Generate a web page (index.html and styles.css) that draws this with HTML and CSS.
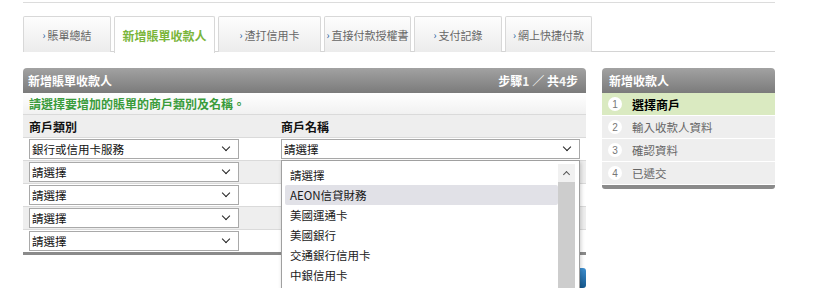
FILE: index.html
```html
<!DOCTYPE html>
<html lang="zh-Hant">
  <head>
    <meta charset="UTF-8" />
    <meta name="viewport" content="width=device-width, initial-scale=1.0" />
    <title>新增賬單收款人</title>
    <link rel="stylesheet" href="styles.css">
  </head>
  <body>
    <div class="page">
      <div class="topline"></div>
      <ul class="tabs">
        <li class="tab"><span class="arrow">›</span>賬單總結</li>
        <li class="tab active">新增賬單收款人</li>
        <li class="tab"><span class="arrow">›</span>渣打信用卡</li>
        <li class="tab"><span class="arrow">›</span>直接付款授權書</li>
        <li class="tab"><span class="arrow">›</span>支付記錄</li>
        <li class="tab"><span class="arrow">›</span>網上快捷付款</li>
      </ul>
      <div class="content">
        <div class="main">
          <div class="panel">
            <div class="panel-head">
              <span>新增賬單收款人</span>
              <span class="steps">步驟<b>1</b> ／ 共<b>4</b>步</span>
            </div>
            <div class="hint">請選擇要增加的賬單的商戶類別及名稱。</div>
            <div class="grid head-row">
              <div>商戶類別</div>
              <div>商戶名稱</div>
            </div>
            <div class="grid row">
              <div class="select short">銀行或信用卡服務<span class="chev"></span></div>
              <div class="select wide">請選擇<span class="chev"></span></div>
            </div>
            <div class="grid row odd">
              <div class="select short">請選擇<span class="chev"></span></div>
              <div class="select wide"></div>
            </div>
            <div class="grid row">
              <div class="select short">請選擇<span class="chev"></span></div>
              <div class="select wide"></div>
            </div>
            <div class="grid row odd">
              <div class="select short">請選擇<span class="chev"></span></div>
              <div class="select wide"></div>
            </div>
            <div class="grid row">
              <div class="select short">請選擇<span class="chev"></span></div>
              <div class="select wide"></div>
            </div>
            <div class="panel-foot"></div>
          </div>
          <div class="actions">
            <span class="btn">下一步</span>
          </div>

          <div class="dropdown">
            <ul class="options">
              <li>請選擇</li>
              <li class="hover">AEON信貸財務</li>
              <li>美國運通卡</li>
              <li>美國銀行</li>
              <li>交通銀行信用卡</li>
              <li>中銀信用卡</li>
              <li>建行(亞洲)銀聯雙幣信用卡</li>
            </ul>
            <div class="scrollbar">
              <div class="scroll-up"></div>
              <div class="thumb"></div>
            </div>
          </div>
        </div>

        <div class="side">
          <div class="panel-head">新增收款人</div>
          <ul class="step-list">
            <li class="current"><span class="num">1</span>選擇商戶</li>
            <li><span class="num">2</span>輸入收款人資料</li>
            <li><span class="num">3</span>確認資料</li>
            <li><span class="num">4</span>已遞交</li>
          </ul>
          <div class="side-foot"></div>
        </div>
      </div>
    </div>
  </body>
</html>
```

FILE: styles.css
```css
* {
  box-sizing: border-box;
  font-family: "Noto Sans CJK TC", "Liberation Sans", sans-serif;
}
body {
  margin: 0;
  background-color: #fff;
  color: #222;
}
ul {
  list-style: none;
  margin: 0;
  padding: 0;
}
.page {
  width: 752px;
  margin-left: 23px;
  padding-top: 2px;
}
.topline {
  height: 1px;
  background-color: #dcdcdc;
}

/* tabs */
.tabs {
  display: flex;
  margin-top: 13px;
  height: 36px;
  border-bottom: 1px solid #d4d4d4;
}
.tab {
  height: 36px;
  margin-right: 3px;
  display: flex;
  align-items: center;
  justify-content: center;
  white-space: nowrap;
  font-size: 11px;
  color: #666;
  border: 1px solid #d8d8d8;
  border-bottom: none;
  border-radius: 2px 2px 0 0;
  background: linear-gradient(#fdfdfd, #ececec);
}
.tab:nth-child(1) { width: 88px; }
.tab:nth-child(2) { width: 101px; }
.tab:nth-child(3) { width: 103px; }
.tab:nth-child(4) { width: 87px; }
.tab:nth-child(5) { width: 88px; }
.tab:nth-child(6) { width: 87px; }
.tab .arrow {
  color: #1f5f9e;
  font-size: 10px;
  margin-right: 2px;
}
.tab.active {
  height: 37px;
  background: #fff;
  color: #7ab53a;
  font-weight: bold;
  font-size: 12px;
}

.content {
  display: flex;
  gap: 16px;
  margin-top: 16px;
}

/* main panel */
.main {
  position: relative;
  width: 563px;
}
.panel-head {
  height: 25px;
  display: flex;
  align-items: center;
  justify-content: space-between;
  padding: 0 8px 0 5px;
  background: linear-gradient(#a2a2a2, #7b7b7b);
  border-radius: 4px 4px 0 0;
  color: #fff;
  font-weight: bold;
  font-size: 12px;
}
.steps b {
  font-weight: bold;
  color: #f4f4f4;
}
.hint {
  height: 21px;
  padding-left: 6px;
  display: flex;
  align-items: center;
  font-size: 12px;
  font-weight: bold;
  color: #3a9c3c;
  background: linear-gradient(#fff, #f1f1f1);
}
.grid {
  display: grid;
  grid-template-columns: 252px 1fr;
  padding: 0 6px;
  align-items: center;
  border-top: 1px solid #dadada;
}
.head-row {
  height: 23px;
  background-color: #eee;
  font-size: 12px;
  font-weight: bold;
  color: #111;
}
.row {
  height: 23px;
  background-color: #fff;
}
.row.odd {
  background-color: #eee;
}
.select {
  position: relative;
  height: 20px;
  display: flex;
  align-items: center;
  padding-left: 2px;
  font-size: 11.5px;
  color: #111;
  background-color: #fff;
  border: 1px solid #a9a9a9;
}
.select.short {
  width: 210px;
}
.select.wide {
  width: 299px;
}
.chev {
  position: absolute;
  right: 9px;
  top: 4px;
  width: 6px;
  height: 6px;
  border-right: 1.5px solid #222;
  border-bottom: 1.5px solid #222;
  transform: rotate(45deg);
}
.panel-foot {
  height: 3px;
  background-color: #8a8a8a;
}
.actions {
  display: flex;
  justify-content: flex-end;
  margin-top: 13px;
}
.btn {
  width: 64px;
  height: 20px;
  display: flex;
  align-items: center;
  justify-content: center;
  font-size: 12px;
  color: #fff;
  border-radius: 3px;
  background: linear-gradient(#3d8fd0, #16598f);
}

/* open dropdown */
.dropdown {
  position: absolute;
  left: 258px;
  top: 92px;
  width: 299px;
  height: 160px;
  display: flex;
  padding: 3px 4px 0 3px;
  background-color: #fff;
  border: 1px solid #a0a0a0;
  box-shadow: 1px 2px 4px rgba(0, 0, 0, 0.2);
}
.options {
  flex: 1;
  padding-top: 1px;
}
.options li {
  height: 20px;
  display: flex;
  align-items: center;
  padding-left: 5px;
  font-size: 11.5px;
  color: #1a1a1a;
  border-radius: 2px;
  white-space: nowrap;
}
.options li.hover {
  background-color: #e1e1e7;
}
.scrollbar {
  width: 17px;
  display: flex;
  flex-direction: column;
  background-color: #f1f1f1;
}
.scroll-up {
  height: 18px;
  position: relative;
}
.scroll-up::after {
  content: "";
  position: absolute;
  left: 6px;
  top: 8px;
  width: 4px;
  height: 4px;
  border-left: 1.5px solid #555;
  border-top: 1.5px solid #555;
  transform: rotate(45deg);
}
.thumb {
  flex: 1;
  background-color: #cdcdcd;
}

/* side panel */
.side {
  width: 173px;
}
.side .panel-head {
  padding-left: 7px;
}
.step-list li {
  height: 22px;
  display: flex;
  align-items: center;
  padding-left: 6px;
  margin-bottom: 1px;
  font-size: 11.5px;
  color: #666;
  background-color: #eee;
}
.step-list li.current {
  background-color: #daeac1;
  color: #000;
  font-weight: bold;
  font-size: 12px;
}
.num {
  width: 14px;
  height: 14px;
  margin-right: 10px;
  display: flex;
  align-items: center;
  justify-content: center;
  border-radius: 50%;
  background-color: #fff;
  font-family: "Liberation Sans", sans-serif;
  font-size: 10px;
  font-weight: normal;
  color: #777;
}
.side-foot {
  height: 4px;
  background-color: #8a8a8a;
  border-radius: 0 0 3px 3px;
}
```
